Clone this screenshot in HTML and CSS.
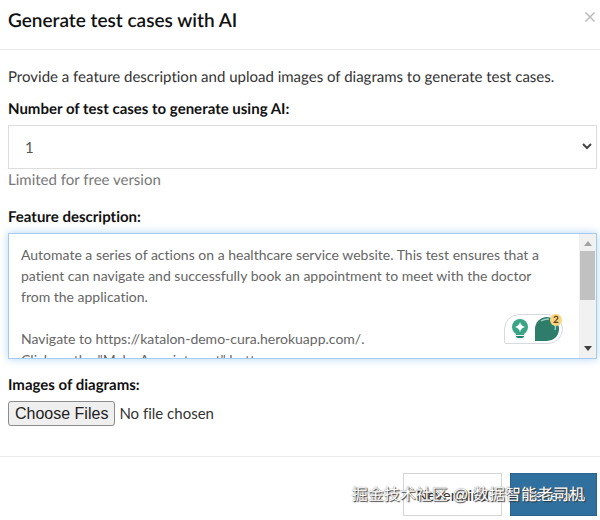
FILE: index.html
```html
<!DOCTYPE html>
<html lang="en">
<head>
    <meta charset="UTF-8">
    <meta name="viewport" content="width=device-width, initial-scale=1.0">
    <title>Generate test cases with AI</title>
    <link rel="stylesheet" href="styles.css">
</head>
<body>
    <form class="modal">
        <header class="modal-header">
            <h1 class="modal-title">Generate test cases with AI</h1>
            <button type="button" class="close" aria-label="Close">
                <svg width="10" height="10" viewBox="0 0 10 10"><path d="M.5 .5l9 9M9.5 .5l-9 9"/></svg>
            </button>
        </header>

        <div class="modal-body">
            <p class="intro">Provide a feature description and upload images of diagrams to generate test cases.</p>

            <label class="label" for="count">Number of test cases to generate using AI:</label>
            <div class="select-wrap">
                <select class="select" id="count">
                    <option>1</option>
                </select>
                <svg class="chevron" width="10" height="7" viewBox="0 0 10 7"><path d="M1 1l4 4 4-4"/></svg>
            </div>
            <p class="hint">Limited for free version</p>

            <label class="label" for="feature">Feature description:</label>
            <div class="editor">
                <textarea class="textarea" id="feature" spellcheck="false">Automate a series of actions on a healthcare service website. This test ensures that a patient can navigate and successfully book an appointment to meet with the doctor from the application.

Navigate to https://katalon-demo-cura.herokuapp.com/.
Click on the "Make Appointment" button.</textarea>
                <div class="scrollbar">
                    <svg width="8" height="5" viewBox="0 0 8 5"><path fill="#a3a3a3" d="M0 5l4-5 4 5z"/></svg>
                    <div class="track"><div class="thumb"></div></div>
                    <svg width="8" height="5" viewBox="0 0 8 5"><path fill="#404040" d="M0 0l4 5 4-5z"/></svg>
                </div>
                <div class="assistant">
                    <svg width="16" height="20" viewBox="0 0 16 20">
                        <circle cx="8" cy="8" r="8" fill="#3aa585"/>
                        <path fill="#3aa585" d="M4 13h8v3H4z"/>
                        <path fill="#23806a" d="M4 17h8q0 2-2 2H6q-2 0-2-2z"/>
                        <path fill="#fff" d="M8 3q1 4 5 5-4 1-5 5-1-4-5-5 4-1 5-5z"/>
                    </svg>
                    <svg width="24" height="24" viewBox="0 0 24 24">
                        <path fill="#2e7d6b" d="M0 24V12A12 12 0 1 1 12 24z"/>
                        <path fill="none" stroke="#9fd0c3" stroke-width="1.5" d="M6 4q3-2 8-2M20 8q1 2 0 5"/>
                    </svg>
                    <span class="badge">2</span>
                </div>
            </div>

            <label class="label" for="images">Images of diagrams:</label>
            <input class="file" id="images" type="file" multiple>
        </div>

        <footer class="modal-footer">
            <button type="button" class="btn">Nevermind</button>
            <button type="submit" class="btn btn-primary">Generate</button>
            <span class="watermark">掘金技术社区 @ 数据智能老司机</span>
        </footer>
    </form>
</body>
</html>
```

FILE: styles.css
```css
* {
    box-sizing: border-box;
}

body {
    margin: 0;
    background: #fff;
    color: #333;
    font-family: Lato, "Liberation Sans", sans-serif;
    font-size: 15px;
    line-height: 20px;
    font-variant-ligatures: none;
    text-rendering: geometricPrecision;
}

.modal-header {
    display: flex;
    justify-content: space-between;
    align-items: flex-start;
    padding: 9px 5px 16px 8px;
    border-bottom: 1px solid #ececec;
}

.modal-title {
    margin: 0;
    color: #111;
    font-size: 19px;
    font-weight: 600;
    line-height: 24px;
}

.close {
    display: flex;
    padding: 3px 0;
    border: 0;
    background: none;
    cursor: pointer;
}

.close svg {
    fill: none;
    stroke: #bbb;
    stroke-width: 1.5;
}

.modal-body {
    padding: 17px 3px 30px 8px;
}

.intro {
    margin: 0 0 12px;
}

.label {
    display: block;
    margin-bottom: 6px;
    color: #111;
    font-weight: 700;
}

.select-wrap {
    position: relative;
}

.select {
    display: block;
    width: 100%;
    height: 44px;
    padding: 0 16px;
    border: 1px solid #ddd;
    border-radius: 0;
    background: #fff;
    color: #555;
    font: inherit;
    appearance: none;
}

.chevron {
    position: absolute;
    top: 18px;
    right: 5px;
    fill: none;
    stroke: #444;
    stroke-width: 2;
    pointer-events: none;
}

.hint {
    margin: 0 0 16px;
    color: #777;
    line-height: 22px;
}

.editor {
    position: relative;
    display: flex;
    height: 126px;
    margin-bottom: 16px;
    border: 1px solid #a5cbef;
    box-shadow: 0 0 8px rgba(102, 175, 233, 0.5);
}

.textarea {
    flex: 1;
    padding: 10px 24px 0 12px;
    border: 0;
    outline: 0;
    background: #fff;
    color: #666;
    font: inherit;
    font-size: 14px;
    line-height: 21px;
    resize: none;
    overflow: hidden;
}

.scrollbar {
    display: flex;
    flex-direction: column;
    align-items: center;
    width: 17px;
    padding: 7px 1px;
    background: #f1f1f1;
}

.track {
    flex: 1;
    width: 100%;
    padding: 5px 0;
}

.thumb {
    height: 49px;
    background: #c1c1c1;
}

.assistant {
    position: absolute;
    right: 33px;
    bottom: 14px;
    display: flex;
    align-items: center;
    gap: 7px;
    padding: 2px 3px 2px 7px;
    border: 1px solid #d8d9df;
    border-radius: 16px 16px 16px 2px;
    background: #fff;
}

.badge {
    position: absolute;
    top: -1px;
    right: 0;
    width: 12px;
    height: 12px;
    border-radius: 6px;
    background: #fcd582;
    color: #5c4215;
    font-size: 10px;
    font-weight: 700;
    line-height: 12px;
    text-align: center;
}

.file {
    display: block;
    width: 100%;
    color: #333;
    font: inherit;
}

.file::file-selector-button {
    height: 25px;
    margin-right: 4px;
    padding: 0 6px;
    border: 1px solid #8c8c8c;
    border-radius: 3px;
    background: #efefef;
    color: #222;
    font-family: "Liberation Sans", Arial, sans-serif;
    font-size: 16px;
}

.modal-footer {
    position: relative;
    display: flex;
    justify-content: flex-end;
    gap: 8px;
    padding: 16px 3px 4px;
    border-top: 1px solid #ececec;
}

.btn {
    height: 43px;
    padding: 0 12px;
    border: 1px solid #d5d5d5;
    background: #fff;
    color: #333;
    font: inherit;
    cursor: pointer;
}

.btn-primary {
    border-color: #29648f;
    background: #30709f;
    color: #fff;
}

.watermark {
    position: absolute;
    right: 15px;
    bottom: 12px;
    color: #fff;
    font-family: "Liberation Sans", "Noto Sans CJK SC", sans-serif;
    font-size: 16px;
    line-height: 24px;
    text-shadow: 1px 1px 1px #333, 0 0 1px #666;
    pointer-events: none;
}
```
